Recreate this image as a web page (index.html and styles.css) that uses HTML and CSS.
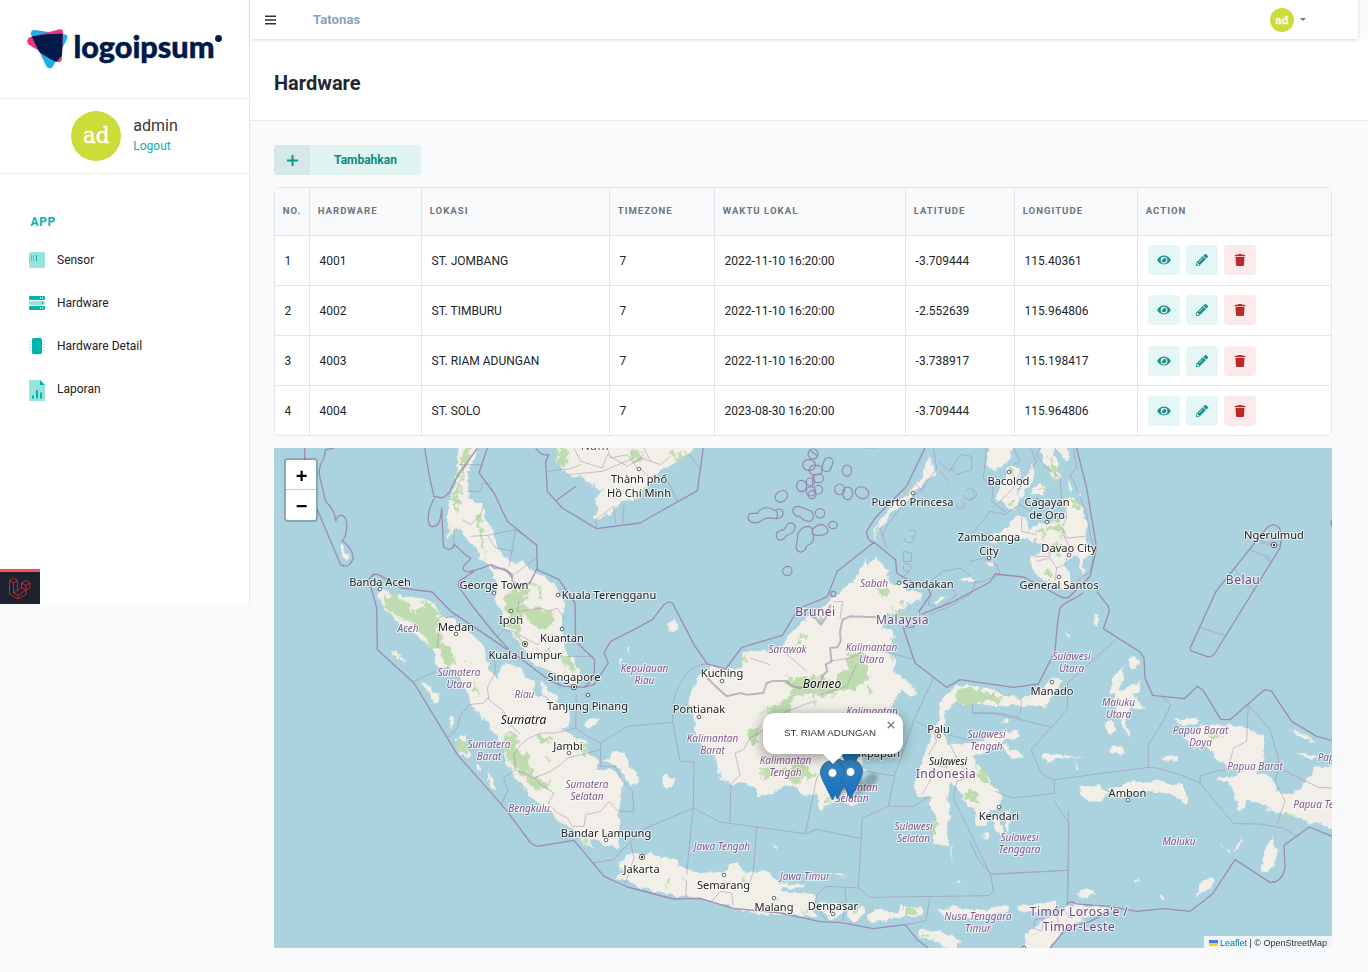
FILE: index.html
```html
<!DOCTYPE html>
<html lang="id">
<head>
<meta charset="utf-8">
<title>Hardware</title>
<link rel="stylesheet" href="styles.css">
</head>
<body>
<svg class="defs" width="0" height="0" aria-hidden="true">
  <symbol id="eye" viewBox="0 0 576 512"><path d="M572.52 241.4C518.29 135.59 410.93 64 288 64S57.68 135.64 3.48 241.41a32.35 32.35 0 0 0 0 29.19C57.71 376.41 165.07 448 288 448s230.32-71.64 284.52-177.41a32.35 32.35 0 0 0 0-29.19zM288 400a144 144 0 1 1 144-144 143.93 143.93 0 0 1-144 144zm0-240a95.31 95.31 0 0 0-25.31 3.79 47.85 47.85 0 0 1-66.9 66.9A95.78 95.78 0 1 0 288 160z"/></symbol>
  <symbol id="pencil" viewBox="0 0 512 512"><path d="M497.9 142.1l-46.1 46.1c-4.7 4.7-12.3 4.7-17 0l-111-111c-4.7-4.7-4.7-12.3 0-17l46.1-46.1c18.7-18.7 49.1-18.7 67.9 0l60.1 60.1c18.8 18.7 18.8 49.1 0 67.9zM284.2 99.8L21.6 362.4.4 483.9c-2.9 16.4 11.4 30.6 27.8 27.8l121.5-21.3 262.6-262.6c4.7-4.7 4.7-12.3 0-17l-111-111c-4.8-4.7-12.4-4.7-17.1 0zM124.1 339.9c-5.5-5.5-5.5-14.3 0-19.8l154-154c5.5-5.5 14.3-5.5 19.8 0s5.5 14.3 0 19.8l-154 154c-5.5 5.5-14.3 5.5-19.8 0zM88 424h48v36.3l-64.5 11.3-31.1-31.1L51.7 376H88v48z"/></symbol>
  <symbol id="trash" viewBox="0 0 448 512"><path d="M432 32H312l-9.4-18.7A24 24 0 0 0 281.1 0H166.8a23.72 23.72 0 0 0-21.4 13.3L136 32H16A16 16 0 0 0 0 48v32a16 16 0 0 0 16 16h416a16 16 0 0 0 16-16V48a16 16 0 0 0-16-16zM53.2 467a48 48 0 0 0 47.9 45h245.8a48 48 0 0 0 47.9-45L416 128H32z"/></symbol>
  <symbol id="pin" viewBox="0 0 25 41"><path d="M12.5.5C5.9.5.5 5.7.5 12.3c0 3 1.600 6.700 2.700 8.900L12.500 40l9.300-18.800c1.100-2.200 2.700-5.900 2.700-8.900C24.500 5.700 19.100.5 12.500.5z" fill="url(#pinfill)" stroke="#2e6c97"/><circle cx="12.500" cy="12.900" r="4.300" fill="#fff" stroke="#2e6c97" stroke-width=".6"/></symbol>
  <linearGradient id="pinfill" x1="0" y1="0" x2="0" y2="1"><stop offset="0" stop-color="#3883b7"/><stop offset="1" stop-color="#126fc6"/></linearGradient>
  <filter id="coast" filterUnits="userSpaceOnUse" x="-20" y="-20" width="3220" height="1540"><feTurbulence type="fractalNoise" baseFrequency=".035" numOctaves="3" seed="4"/><feDisplacementMap in="SourceGraphic" scale="26" xChannelSelector="R" yChannelSelector="G"/></filter>
  <filter id="woods" filterUnits="userSpaceOnUse" x="-20" y="-20" width="3220" height="1540"><feTurbulence type="fractalNoise" baseFrequency=".045" numOctaves="3" seed="9"/><feDisplacementMap in="SourceGraphic" scale="50" xChannelSelector="R" yChannelSelector="G"/></filter>
</svg>
<div class="page">
  <aside class="sidebar">
    <div class="brand">
      <svg width="200" height="44" viewBox="24 26 200 44" aria-label="logoipsum">
        <path d="M31 32Q32 29.500 35 30L65.500 34.500Q68.500 35.500 67 39L53 66.500Q49.500 70.500 46.500 66.500L31.500 36Q30.500 34 31 32z" fill="#1eaee8"/>
        <path d="M59.500 29.300Q63 29 63 32L61.800 59.500Q61 63 57.500 62L28.500 44.500Q25.500 41 29 37.500z" fill="#ee3480"/>
        <path d="M31.800 36.500Q46 33 62.800 33.800L62 55L56.300 62Q46 57 39.500 52Q35 44 31.800 36.500z" fill="#001a49"/>
        <text x="73.500" y="57.500" class="logo-text" textLength="141" lengthAdjust="spacingAndGlyphs">logoipsum</text>
        <circle cx="218.500" cy="38.500" r="3.400" fill="#001a49"/>
      </svg>
    </div>
    <div class="user">
      <div class="avatar avatar-lg">ad</div>
      <div class="user-info"><span class="user-name">admin</span><a class="logout">Logout</a></div>
    </div>
    <nav class="menu">
      <h3 class="menu-title">APP</h3>
      <a class="menu-item"><svg width="16" height="16" viewBox="0 0 16 16"><rect width="16" height="16" rx="2" fill="#99e2de"/><path d="M2.500 3v6M4.500 3v6" stroke="#4cc9c3"/><path d="M7.500 3v6" stroke="#00b5ad"/></svg>Sensor</a>
      <a class="menu-item"><svg width="16" height="16" viewBox="0 0 16 16"><rect y="1" width="16" height="4" rx="1" fill="#00b5ad"/><rect y="6" width="16" height="4" rx="1" fill="#99e2de"/><rect y="11" width="16" height="4" rx="1" fill="#00b5ad"/><path d="M11.500 2v2M13.500 2v2M11.500 12v2M13.500 12v2" stroke="#b2e9e6"/><path d="M13.500 7v2" stroke="#00b5ad"/></svg>Hardware</a>
      <a class="menu-item"><svg width="16" height="16" viewBox="0 0 16 16"><path d="M0 3.500h16M0 6.500h16M0 9.500h16M0 12.500h16" stroke="#99e2de" stroke-dasharray="2 12"/><rect x="3" width="10" height="16" rx="1.500" fill="#00b5ad"/></svg>Hardware Detail</a>
      <a class="menu-item"><svg class="report" width="16" height="21" viewBox="0 0 16 21"><path d="M0 0h11l5 5v16H0z" fill="#99e2de"/><path d="M11 0v5h5z" fill="#00b5ad"/><path d="M4 18.500v-3M8 18.500v-8.500M12 18.500v-6" stroke="#00b5ad" stroke-width="2"/></svg>Laporan</a>
    </nav>
    <div class="debugbar"><svg width="22" height="22" viewBox="0 0 22 22" fill="none" stroke="#e0302a" stroke-width=".8" stroke-linejoin="round"><path d="M.5 3.500l4-2.500 4 2.500v10l4-2.500V6l4.500-2.500L21 6v4.500L17 13v4.500L9 22l-8.500-4.800zM.5 3.500l4 2.500 4-2.500M4.500 6v10l4.500 2.500L17 13M4.500 16l4-2.500M12.500 6l4.500 2.500L21 6M17 8.500V13l-4.500-2.500M9 18.500V22"/></svg></div>
  </aside>
  <main class="main">
    <header class="topbar">
      <svg width="11" height="10" viewBox="0 0 11 10"><path d="M0 1.200h11M0 5h11M0 8.800h11" stroke="#303236" stroke-width="1.500"/></svg>
      <span class="app-name">Tatonas</span>
      <div class="account"><div class="avatar avatar-sm">ad</div><i class="caret"></i></div>
    </header>
    <div class="title-bar"><h1>Hardware</h1></div>
    <section class="content">
      <a class="add-button"><span class="add-icon"><svg width="11" height="11" viewBox="0 0 11 11"><path d="M5.500 0v11M0 5.500h11" stroke="#0d9488" stroke-width="2"/></svg></span><span class="add-label">Tambahkan</span></a>
      <div class="table-box">
        <table>
          <colgroup><col class="c1"><col class="c2"><col class="c3"><col class="c4"><col class="c5"><col class="c6"><col class="c7"><col></colgroup>
          <thead><tr><th>NO.</th><th>HARDWARE</th><th>LOKASI</th><th>TIMEZONE</th><th>WAKTU LOKAL</th><th>LATITUDE</th><th>LONGITUDE</th><th>ACTION</th></tr></thead>
          <tbody>
            <tr><td>1</td><td>4001</td><td>ST. JOMBANG</td><td>7</td><td>2022-11-10 16:20:00</td><td>-3.709444</td><td>115.40361</td><td class="raised"><div class="actions"><a class="act"><svg><use href="#eye"/></svg></a><a class="act"><svg><use href="#pencil"/></svg></a><a class="act del"><svg><use href="#trash"/></svg></a></div></td></tr>
            <tr><td>2</td><td>4002</td><td>ST. TIMBURU</td><td>7</td><td>2022-11-10 16:20:00</td><td>-2.552639</td><td>115.964806</td><td class="raised"><div class="actions"><a class="act"><svg><use href="#eye"/></svg></a><a class="act"><svg><use href="#pencil"/></svg></a><a class="act del"><svg><use href="#trash"/></svg></a></div></td></tr>
            <tr><td>3</td><td>4003</td><td>ST. RIAM ADUNGAN</td><td>7</td><td>2022-11-10 16:20:00</td><td>-3.738917</td><td>115.198417</td><td><div class="actions"><a class="act"><svg><use href="#eye"/></svg></a><a class="act"><svg><use href="#pencil"/></svg></a><a class="act del"><svg><use href="#trash"/></svg></a></div></td></tr>
            <tr><td>4</td><td>4004</td><td>ST. SOLO</td><td>7</td><td>2023-08-30 16:20:00</td><td>-3.709444</td><td>115.964806</td><td><div class="actions"><a class="act"><svg><use href="#eye"/></svg></a><a class="act"><svg><use href="#pencil"/></svg></a><a class="act del"><svg><use href="#trash"/></svg></a></div></td></tr>
          </tbody>
        </table>
      </div>
      <div class="map">
        <svg class="map-canvas" width="1058" height="500" viewBox="0 0 3174 1500">
          <!-- land masses -->
          <g class="land" filter="url(#coast)">
            <path d="M555 -30L612 -30L612 0L600 40L582 60L580 110L585 150L605 165L628 165L632 205L655 235L665 290L690 325L720 345L745 335L775 365L800 385L840 410L862 445L872 500L864 545L875 600L905 640L920 690L905 712L870 700L820 670L790 650L760 625L735 585L710 550L690 535L685 490L667 460L665 430L672 420L655 375L645 350L620 330L610 300L590 290L570 260L545 235L530 260L520 270L523 240L518 200L530 150L545 110L548 60Z"/>
            <path d="M312 440L325 420L350 432L380 445L440 448L475 462L500 485L515 510L545 512L575 545L620 580L640 610L634 640L665 690L685 650L720 650L750 670L758 690L740 688L780 700L790 740L830 760L870 770L890 800L885 830L865 845L900 860L940 880L942 915L975 940L965 960L1010 965L1035 980L1050 1005L1040 1040L1035 1080L1040 1130L1035 1205L1000 1190L975 1180L950 1180L960 1208L930 1180L890 1140L860 1120L830 1090L790 1060L765 1040L735 1000L700 950L690 900L665 860L640 820L600 790L580 750L565 700L545 660L520 660L485 645L478 600L430 560L370 520L330 485Z"/>
            <path d="M845 -30H1280L1260 0L1240 20L1200 45L1150 75L1120 105L1095 150L1060 155L1030 175L1000 200L965 215L970 150L985 125L950 110L920 85L885 80L855 50Z"/>
            <path d="M345 605L365 610L395 640L375 635ZM442 702L465 712L478 730L495 740L490 766L475 762L465 735ZM545 870L570 868L590 925L560 920ZM606 945L625 955L624 965L610 957ZM637 975L655 990L668 1020L668 1030L655 1015L640 990ZM528 800L540 820L530 845ZM990 935L1015 910L1038 908L1055 922L1068 955L1090 975L1092 1000L1068 1012L1050 980L1035 960ZM1158 985L1175 978L1203 990L1200 1010L1180 1022L1165 1012ZM935 820L950 805L975 820L950 835L940 850ZM1185 530L1200 515L1212 535L1198 553ZM202 290L212 295L222 325L215 340L205 325ZM800 702L830 735L850 750L835 760L805 740ZM700 645L730 655L725 680L705 690ZM1035 640L1045 635L1042 655ZM1060 605L1068 600L1068 615Z"/>
            <g transform="translate(1038)">
              <path d="M205 770L210 730L235 690L262 665L275 650L310 665L365 660L372 615L430 605L480 600L510 560L545 525L570 505L600 480L640 460L660 430L700 400L720 370L740 330L745 355L765 325L785 350L810 365L805 400L840 410L880 430L915 440L900 460L860 465L840 490L800 495L785 540L815 545L820 590L800 610L835 640L820 670L865 700L895 740L880 747L845 725L825 760L800 800L790 850L770 900L720 920L735 960L720 990L700 1020L715 1070L695 1075L660 1050L600 1088L597 1045L590 1035L560 1040L530 1020L500 1010L460 1035L410 1045L400 1010L350 1005L310 1005L300 980L285 930L250 900L225 840L220 800Z"/>
              <path d="M930 870L945 830L960 800L955 770L975 745L1010 715L1040 710L1100 720L1160 745L1240 745L1270 720L1285 700L1310 690L1325 700L1300 740L1270 780L1230 775L1180 770L1130 775L1050 765L1000 765L975 800L970 850L985 890L1020 890L1080 880L1150 850L1195 845L1195 870L1150 880L1100 910L1060 930L1090 970L1115 1010L1150 1040L1140 1080L1115 1090L1100 1130L1070 1135L1065 1090L1025 1060L1025 1040L990 1000L985 1040L990 1110L980 1180L990 1190L940 1190L945 1120L930 1050L890 1045L885 1010L905 950Z"/>
              <path d="M40 1215L110 1220L160 1235L185 1255L200 1270L240 1272L310 1275L330 1245L355 1245L365 1265L400 1275L440 1270L470 1295L490 1330L580 1335L590 1350L580 1385L590 1405L520 1400L420 1400L330 1375L200 1345L150 1340L60 1315L-15 1290L15 1270L-5 1268L0 1235ZM480 1310L555 1305L540 1318L485 1322ZM600 1370L650 1365L675 1385L640 1415L605 1390ZM680 1380L725 1370L735 1395L705 1420L685 1410ZM750 1390L770 1380L830 1397L845 1370L870 1385L905 1375L910 1400L850 1410L800 1420L750 1425L742 1415ZM955 1385L1000 1375L1100 1390L1160 1370L1170 1388L1130 1400L1050 1410L970 1405ZM1190 1375L1240 1368L1315 1362L1310 1380L1250 1392L1195 1390ZM895 1450L960 1445L1020 1475L1015 1500L975 1495L940 1475L895 1465Z"/>
              <path d="M925 25L935 40L942 80L920 105L890 125L860 165L820 190L785 240L772 245L782 215L810 180L850 150L880 115L910 90ZM765 280L778 240L780 215L762 250ZM940 465L960 445L985 442L965 458L945 475ZM1020 395L1070 390L1060 400L1030 402ZM1120 1105L1140 1100L1145 1150L1130 1155ZM1155 1090L1170 1085L1165 1150L1155 1140ZM1090 1155L1102 1152L1105 1175L1092 1172ZM1145 890L1160 885L1175 910L1200 905L1210 922L1175 930L1155 910ZM455 1195L470 1198L463 1206ZM993 1195L998 1195L996 1250ZM1135 825L1175 815L1165 825ZM1010 1290L1020 1295L1010 1300ZM640 1272L680 1285L660 1285Z"/>
            </g>
            <g transform="translate(2088)">
              <path d="M60 -30L130 -30L130 30L100 50L60 70L50 40ZM110 60L155 60L150 100L140 150L145 170L120 185L95 160L75 150L100 110ZM185 50L190 90L150 155L140 150L165 90ZM185 125L210 108L228 120L215 140L190 142ZM210 10L240 -20L265 50L270 90L250 95L235 60ZM250 -20L290 -20L300 30L285 42ZM60 290L70 260L110 240L145 205L172 210L180 240L165 262L200 230L240 225L285 210L280 160L300 145L335 180L350 220L350 290L365 315L335 330L345 370L335 380L328 330L305 325L285 350L300 380L300 420L285 430L255 410L220 395L190 370L185 330L210 320L220 290L175 275L130 265L90 275ZM45 345L65 342L68 355L50 360ZM295 90L302 115L298 135L292 110ZM325 125L333 140L328 155Z"/>
              <path d="M475 630L495 628L506 640L500 655L480 665ZM460 655L460 700L440 742L420 735L430 690ZM510 700L505 735L470 755L448 745L480 710ZM430 726L500 728L490 745L520 780L480 775L460 800L485 870L460 840L440 790ZM405 825L425 815L440 845L420 860ZM372 492L382 500L380 540L370 525ZM285 548L298 565L295 572ZM213 920L240 915L300 928L348 930L260 936L215 940ZM315 935L328 970L320 965ZM422 905L432 895L450 897L470 910L450 920L425 918ZM580 930L620 920L625 935L605 945ZM615 815L660 805L690 815L675 830L630 828ZM330 1020L390 1012L412 1035L395 1060L365 1065L335 1045ZM415 1025L480 1000L545 1004L560 993L600 1008L635 1010L655 1050L650 1065L610 1045L550 1030L490 1030L450 1050L420 1045Z"/>
              <path d="M640 870L690 840L720 830L780 830L830 840L875 860L885 890L878 950L865 975L900 980L915 1010L920 1030L955 1040L985 1020L1030 980L1030 960L1110 950V1155L1040 1125L980 1110L940 1100L900 1090L850 1060L830 1050L825 1080L800 1085L795 1050L770 1000L735 995L740 988L790 985L820 970L770 960L735 930L715 895L670 895ZM965 850L1000 858L1040 880L1015 885ZM970 915L1060 925L1060 932L1010 930ZM905 1170L923 1210L915 1250L890 1275L875 1270L880 1215ZM775 1195L790 1215L780 1212ZM815 1165L808 1200L795 1208ZM725 1285L735 1300L705 1335L675 1345L690 1310ZM315 1335L365 1325L380 1335L340 1348ZM565 1345L580 1338L587 1348L578 1360ZM500 1290L508 1287L505 1296ZM705 1260L700 1275L695 1278ZM750 1195L760 1198L755 1205ZM160 1530L165 1460L200 1430L260 1400L290 1375L340 1370L410 1375L380 1395L330 1420L270 1455L235 1510Z"/>
            </g>
          </g>
          <!-- forests -->
          <g class="forest" filter="url(#woods)">
            <path d="M325 440L350 440L400 458L420 490L455 458L490 478L495 520L485 545L500 575L530 600L545 645L510 650L495 610L480 600L440 560L430 530L380 512L335 475ZM700 435L730 430L770 405L755 440L735 470L800 480L840 495L835 530L810 545L780 530L745 495L735 560L750 620L730 560L700 530L695 480ZM575 -20L605 -20L575 50L560 95L555 185L540 190L545 130L560 60ZM605 190L625 200L622 250L640 330L620 290ZM690 860L725 865L730 900L770 925L775 980L820 1000L825 1030L780 1015L740 985L715 950L690 910ZM790 855L830 875L825 890L795 878ZM810 925L832 928L825 940L812 935ZM545 870L570 868L590 925L560 920ZM347 606L395 638L375 632ZM850 625L895 625L905 670L880 665ZM920 880L940 885L935 920L918 905ZM845 -20L890 10L870 60L855 45ZM1080 10L1110 20L1095 45L1070 30ZM1195 20L1235 8L1225 25L1200 35ZM915 1165L935 1175L945 1195ZM595 690L615 740L600 730ZM520 220L530 240L523 265ZM780 410L800 420L805 450L790 440ZM820 590L835 600L830 615ZM580 640L590 650L580 655Z"/>
            <g transform="translate(1038)">
              <path d="M495 690L515 685L515 705L540 685L610 685L640 705L680 660L682 615L715 605L745 660L748 690L705 720L680 715L640 735L590 745L575 790L420 795L480 765L510 740ZM420 960L470 965L455 985L430 1000L425 975ZM500 960L550 940L585 980L560 1000L520 1010L490 990ZM500 790H580V740H530ZM385 850L415 835L415 885L390 885ZM545 555L555 575L530 580ZM585 500L615 510L600 530ZM770 425L800 420L805 440L780 445ZM815 485L850 490L870 500L840 505ZM830 460L860 465L840 475ZM375 615L385 640L372 640ZM740 715L760 725L750 745ZM610 1040L640 1060L620 1065ZM340 672L360 680L350 690ZM850 145L870 130L865 145ZM765 255L772 240L775 255ZM1020 715L1060 725L1150 745L1130 765L1060 760L1015 770L1010 745ZM960 935L985 945L980 970L950 955ZM1040 1020L1070 1035L1080 1070L1040 1050ZM1065 955L1100 970L1120 1000L1095 1010L1075 985ZM935 1130L955 1125L950 1160L930 1150ZM690 1380L725 1375L710 1395ZM845 1370L860 1375L850 1385ZM860 1385L895 1380L890 1400L865 1405ZM900 1455L925 1458L915 1468ZM540 1380L565 1385L555 1395ZM60 1260L75 1265L65 1275ZM130 1300L150 1305L135 1315ZM370 1290L385 1300L375 1310ZM470 1350L485 1355L475 1365Z"/>
            </g>
            <g transform="translate(2088)"><path d="M120 60L135 65L132 90L120 80ZM115 155L135 160L130 178L118 170ZM235 15L255 45L265 80L250 92L240 55ZM205 120L225 122L215 132ZM195 250L225 245L225 275L205 265ZM235 235L270 215L275 260L285 285L265 260ZM245 285L270 290L265 330L245 320ZM215 370L245 375L250 398L225 390ZM285 150L320 160L335 180L310 180ZM725 855L745 860L740 875L725 870ZM755 860L765 865L760 875ZM925 868L937 870L935 882ZM1015 870L1030 878L1015 885ZM935 1095L975 1105L945 1108ZM190 1455L200 1450L195 1465Z"/></g>
          </g>
          <!-- province borders -->
          <g class="thin">
            <path d="M555 50H620M580 130H620L625 105L655 108M530 155L560 160M565 215L590 230L620 200L630 165M590 265L640 262L725 245L790 292M640 262L665 300L720 310M725 245L705 355M787 330L720 380M735 460L730 490L770 485L800 480L825 490L850 480L870 510M735 560L790 590L835 560L870 580M690 545L665 570M690 545L720 550L760 600M735 640L750 610M540 250V300M495 545L490 600M515 510L560 500M660 610L665 670L640 720L645 755L690 790L700 820L740 860M420 700L485 670M520 870L550 840L560 800L585 770L630 765L645 745M765 870L740 890L720 920L725 965L780 990M765 870L800 855L840 855L870 850L905 840L907 740M780 990L830 970L860 950L880 930L980 905M980 885V955L1025 956L1045 1000L1075 1030L1080 1090L1033 1090M905 840L935 862L980 885L1060 835L1198 823M725 965L688 990L702 1025L682 1070M780 990L800 1010L840 1035L822 1065L850 1095L880 1110L895 1135L930 1135L935 1100L980 1090L1005 1060L1033 1090M895 1140L878 1180M955 1245L1020 1235L1045 1205L1115 1140L1258 1080M1070 1185L1080 1230L1052 1310M820 70L890 62L920 50M880 80L985 70L1080 30M968 242L965 215L1018 175L1025 225M1050 170L1045 230M900 0L920 40L985 60L1000 20L1060 55L1100 30L1160 50L1190 25M880 625H960M850 700L860 720M1098 60L1140 100M1170 75L1210 160M1245 20L1278 60M1000 0L1010 30L1060 20L1090 60M1110 0L1130 40"/>
            <g transform="translate(1038)">
              <path d="M260 648Q190 650 160 760L158 820L180 940L222 942L220 1080L210 1170L200 1280M220 1080L300 1122L556 1157L592 1144L722 1172M330 1122L332 1010L360 980L345 915L370 905L390 870L415 855L500 790L580 760M556 1157L590 990L620 950M410 1138L400 1270L380 1330M185 1290L200 1300L197 1345M275 1360L300 1330L335 1335L340 1375M715 1320L727 1110L805 1075L880 1075L930 1045M805 1075L825 980L880 820L940 690M740 970L825 984M630 640L690 630L750 600L875 632M600 740L680 715L710 650M660 515L668 460L640 462M715 1320L750 1348L1108 1343L1120 1330L1112 1280L1000 1050L1010 1000L1050 985M715 1320L620 1315L590 1340L585 1370L620 1418M675 1322L678 1360L668 1420M930 1345L918 1418L860 1430M890 820L940 850L950 880L925 920M985 860L1060 880L1090 900M990 890L1020 950L1060 990M1055 795L1128 797L1295 838M1200 800L1205 760L1180 740M1130 725L1115 745M885 105L910 130M960 70L985 100M1112 1280L1343 1267M1345 1090V1205L1343 1365M390 630L450 650M490 610L560 670M620 1010L650 1040M905 1040L930 1000L940 970"/>
              <path d="M770 0L730 0M940 0L950 60L905 125L840 180L800 235L785 270M955 40L990 70L1020 20L1055 25V65L1010 80L990 60M850 310L875 315V340L850 340ZM855 270a14 10 0 1 0 20-5a12 10 0 1 0-10-14M1010 170a12 11 0 1 0 18-8M1030 140a20 16 0 1 0 5-12M800 600L820 640"/>
              <path d="M780 240L790 270L800 300M870 370L850 385M850 360a10 12 0 1 0 22-5a10 10 0 1 0-22 5M870 400L920 410L970 370L1020 360L1070 400L1050 440L1000 470L930 500M980 400L1010 440L960 480L925 470L935 430"/>
            </g>
            <g transform="translate(2088)">
              <path d="M50 0L40 90L70 120L65 160L110 195L150 170L180 190L200 150L240 170L275 150L270 90L230 60L200 20L210 0M130 0L150 40L130 50M310 0L320 60L300 80L320 120L350 200L360 260L375 310L360 370L320 400M180 0L200 40L185 60M155 210V250L200 260M285 160L290 210L275 240L290 270L345 265M290 210L230 210M0 260L30 230L60 190L110 200M200 340L240 330L260 360L285 350L300 300L280 260M190 325H240L230 290M260 360L255 400M155 60L130 120L90 160M0 340L40 330L80 350L90 380L40 400L0 405M10 130Q20 145 0 155M840 305L880 322L905 345M790 360L855 430M690 538L765 563M870 285L910 292M885 320L905 335M868 278L930 292"/>
              <path d="M0 1180L25 1235L62 1278L292 1267M253 1036L128 1050L75 1030M253 1036V995L535 958L560 960L630 980L690 1005L790 1127L870 1128L940 1140L978 1163M253 1060L297 1125L292 1370M253 995L215 978L183 905L292 785V705L320 680L440 573M535 958V890L580 820L602 770L575 745M690 1005L690 985L735 970L775 965L790 900L830 880L835 770L900 845L925 930V960L915 1000L945 1060L920 1130M925 960L1045 1018L1086 1020M1080 950L1086 945M8 765V795L80 795L150 808M280 1380L300 1410L350 1390M260 1400L270 1440L310 1430M340 1380L335 1415M195 1415L220 1410L215 1450L190 1440Z"/>
            </g>
          </g>
          <!-- national borders -->
          <g class="border">
            <path d="M452 0L465 80L480 145L505 150L525 135L550 85L610 0M482 150C465 175 455 220 470 235C490 240 500 225 503 180L508 295C520 310 535 305 540 290C560 300 565 320 590 330C585 345 565 345 568 365C580 380 600 365 620 362L650 350L700 370L715 390M640 0L615 75L660 135L700 220L788 292L790 360L765 410M600 370L555 400L553 415L600 480L660 555L705 605L830 700L870 715L930 718L960 690L962 635L905 580L903 465L855 395L790 365M92 0V40M180 0L155 5L150 30Q130 60 138 90L155 160Q185 190 185 220Q190 200 205 202Q220 208 218 240Q215 270 205 278Q235 300 238 330Q225 365 200 350L130 185M700 605L620 550L530 490L475 432L380 420L330 390Q300 365 285 395L308 480L310 605L420 705L550 920L630 1010L700 1090L770 1185L790 1195L900 1177L990 1285L1060 1317L1198 1353L1278 1351L1378 1381L1520 1395L1638 1421L1703 1424L1798 1442L1893 1430L1930 1475L1963 1500M785 0Q800 25 825 20L815 40L820 130L865 180L968 242L1098 225L1270 128L1288 0M848 157L905 115M930 718L960 710L1003 645L990 615L1010 580L1080 545L1135 515L1170 470Q1190 455 1198 470L1260 590L1300 648L1355 663L1403 598L1525 562L1575 480L1640 455L1660 445L1690 370L1800 283L1865 335L1868 375L1900 395L1965 425L1970 440L1935 490L1940 500L2040 460L2148 402L2163 378L2248 387L2358 445Q2378 455 2388 445L2448 385L2468 300L2438 120L2408 0"/>
            <path d="M1953 0L1898 115L1803 210L1778 250Q1778 280 1800 283M2468 430L2503 475L2506 490L2488 542L2598 612L2610 630L2613 690L2636 742L2731 752L2771 715L2788 728L2840 814L2868 815L2968 728Q2980 722 2993 730L3053 820L3128 865L3174 877M2428 435L2368 470L2358 480L2350 530L2343 610L2293 708L2218 718L2058 695L2018 718L1923 645L1888 540L1918 537L1940 500M2978 240Q2998 220 3016 240L3023 265L3018 300L2823 615Q2813 630 2798 625L2756 610Q2743 605 2753 590L2826 430ZM2378 1370Q2388 1355 2408 1368L2508 1375L2588 1390L2668 1382L2748 1390L2788 1360L2818 1335L2883 1235L2988 1303Q3023 1305 3033 1260L3030 1192L3106 1137L3174 1165M2328 1500L2378 1440L2448 1420L2498 1395M3172 215V235"/>
            <path class="inland" d="M1300 690L1325 715L1358 745L1400 735L1420 740L1468 735L1478 705L1500 698L1538 700L1555 715L1578 720L1610 712L1638 715L1648 680L1660 670L1655 650L1673 640L1668 600L1690 598L1700 580L1698 550L1706 515L1728 505L1808 508M1610 505L1625 510L1640 530L1655 510L1670 470M650 350L660 360L690 362L715 380V400L735 410L770 405"/>
          </g>
          <!-- reef zones -->
          <g class="reef" transform="translate(1038)">
            <circle cx="579" cy="18" r="15"/><rect x="548" y="35" width="38" height="32" rx="16"/><rect x="609" y="28" width="27" height="43" rx="13" transform="rotate(20 622 50)"/><rect x="568" y="52" width="38" height="28" rx="13"/><ellipse cx="681" cy="68" rx="14" ry="17"/><ellipse cx="545" cy="114" rx="15" ry="17"/><circle cx="571" cy="102" r="12"/><rect x="582" y="78" width="28" height="26" rx="12"/><circle cx="573" cy="130" r="14"/><circle cx="595" cy="125" r="13"/><circle cx="576" cy="140" r="12"/><ellipse cx="659" cy="124" rx="15" ry="16"/><ellipse cx="683" cy="136" rx="15" ry="19"/><ellipse cx="726" cy="134" rx="21" ry="17" transform="rotate(25 726 134)"/><ellipse cx="484" cy="145" rx="20" ry="16" transform="rotate(-35 484 145)"/><path d="M425 218Q405 230 390 220Q378 208 390 196L412 196Q425 176 445 180Q458 180 462 188Q485 175 490 195Q488 213 465 212Q440 205 425 218ZM466 185Q478 198 468 212"/><path d="M518 185Q525 172 540 176L575 190Q588 210 570 220Q555 222 540 206Q520 205 518 185Z"/><circle cx="600" cy="196" r="14"/><path d="M470 255Q480 245 492 245L503 228Q520 218 526 237Q522 258 500 262Q490 280 475 275Q466 268 470 255ZM533 258Q545 235 565 235Q580 238 576 250Q588 275 570 288Q558 292 556 305Q540 320 530 305Q526 290 532 280ZM577 245Q590 228 610 230Q628 240 622 255Q600 268 577 258Z"/><ellipse cx="639" cy="231" rx="13" ry="11"/><circle cx="502" cy="369" r="14"/><circle cx="640" cy="438" r="8"/><path d="M571 8L594 25M578 80V115"/>
          </g>
          <!-- place names -->
          <g class="labels" transform="scale(3) translate(-274 -448)">
            <g class="dots"><circle cx="380" cy="589" r="1.800"/><circle cx="494" cy="593" r="1.800"/><circle cx="558" cy="595" r="1.800"/><circle cx="511" cy="611" r="1.800"/><circle cx="562" cy="629" r="1.800"/><circle cx="456" cy="634" r="1.800"/><circle cx="588" cy="695" r="1.800"/><circle cx="569" cy="753" r="1.800"/><circle cx="606" cy="840" r="1.800"/><circle cx="722" cy="681" r="1.800"/><circle cx="699" cy="717" r="1.800"/><circle cx="899" cy="583" r="1.800"/><circle cx="913" cy="493" r="1.800"/><circle cx="639" cy="469" r="1.800"/><circle cx="1009" cy="472" r="1.800"/><circle cx="1047" cy="522" r="1.800"/><circle cx="989" cy="558" r="1.800"/><circle cx="1069" cy="555" r="1.800"/><circle cx="1059" cy="577" r="1.800"/><circle cx="1052" cy="682" r="1.800"/><circle cx="939" cy="736" r="1.800"/><circle cx="999" cy="807" r="1.800"/><circle cx="1128" cy="800" r="1.800"/><circle cx="724" cy="875" r="1.800"/><circle cx="774" cy="898" r="1.800"/><circle cx="833" cy="914" r="1.800"/><circle cx="1024" cy="948" r="1.800"/><circle cx="525" cy="644" r="2.700"/><circle cx="574" cy="687" r="2.700"/><circle cx="642" cy="857" r="2.700"/><circle cx="1274" cy="545" r="2.700"/></g>
            <g class="capitals"><circle cx="525" cy="644" r="1.200"/><circle cx="574" cy="687" r="1.200"/><circle cx="642" cy="857" r="1.200"/><circle cx="1274" cy="545" r="1.200"/></g>
            <g class="city"><text x="380" y="585.500">Banda Aceh</text><text x="494" y="589">George Town</text><text x="609" y="599">Kuala Terengganu</text><text x="511" y="624">Ipoh</text><text x="562" y="641.500">Kuantan</text><text x="456" y="630.500">Medan</text><text x="525" y="659">Kuala Lumpur</text><text x="574" y="681">Singapore</text><text x="587.500" y="710">Tanjung Pinang</text><text x="568" y="749.500">Jambi</text><text x="606" y="836.500">Bandar Lampung</text><text x="722" y="677">Kuching</text><text x="699" y="713">Pontianak</text><text x="928" y="587.500">Sandakan</text><text x="912.500" y="505.500">Puerto Princesa</text><text x="639" y="483">Thành phố</text><text x="639" y="496.500">Hồ Chí Minh</text><text x="1008.500" y="484.500">Bacolod</text><text x="1047" y="505.500">Cagayan</text><text x="1047" y="518.500">de Oro</text><text x="989" y="541">Zamboanga</text><text x="989" y="555">City</text><text x="1069" y="551.500">Davao City</text><text x="1059" y="589">General Santos</text><text x="1274" y="539">Ngerulmud</text><text x="1052" y="695">Manado</text><text x="938.500" y="733">Palu</text><text x="999" y="819.500">Kendari</text><text x="1127.500" y="796.500">Ambon</text><text x="641.500" y="873">Jakarta</text><text x="723.500" y="888.500">Semarang</text><text x="774" y="911">Malang</text><text x="833" y="910">Denpasar</text><text x="871" y="757">Balikpapan</text></g>
            <g class="region"><text x="408" y="632">Aceh</text><text x="459" y="675.500">Sumatera</text><text x="459" y="687.500">Utara</text><text x="524.500" y="697.500">Riau</text><text x="489" y="748">Sumatera</text><text x="489" y="760">Barat</text><text x="587" y="787.500">Sumatera</text><text x="587" y="799.500">Selatan</text><text x="529" y="811.500">Bengkulu</text><text x="644.500" y="672">Kepulauan</text><text x="644.500" y="684">Riau</text><text x="787.500" y="652.500">Sarawak</text><text x="874" y="587">Sabah</text><text x="871.500" y="651">Kalimantan</text><text x="871.500" y="663">Utara</text><text x="712.500" y="741.500">Kalimantan</text><text x="712.500" y="753.500">Barat</text><text x="785.500" y="764">Kalimantan</text><text x="785.500" y="776">Tengah</text><text x="872" y="715">Kalimantan</text><text x="852" y="790.500">Kalimantan</text><text x="852" y="802">Selatan</text><text x="913.500" y="830">Sulawesi</text><text x="913.500" y="842">Selatan</text><text x="986.500" y="738">Sulawesi</text><text x="986.500" y="750">Tengah</text><text x="1071.500" y="659.500">Sulawesi</text><text x="1071.500" y="671.500">Utara</text><text x="1118.500" y="706">Maluku</text><text x="1118.500" y="718">Utara</text><text x="1019.500" y="840.500">Sulawesi</text><text x="1019.500" y="852.500">Tenggara</text><text x="1200.500" y="734">Papua Barat</text><text x="1200.500" y="746">Daya</text><text x="1255" y="769.500">Papua Barat</text><text x="1325" y="807.500">Papua Tengah</text><text x="1332" y="761">Papua</text><text x="1179" y="845">Maluku</text><text x="722" y="849.500">Jawa Tengah</text><text x="805" y="880">Jawa Timur</text><text x="978" y="919.500">Nusa Tenggara</text><text x="978" y="931.500">Timur</text></g>
            <g class="country"><text x="815.500" y="615.500">Brunei</text><text x="902.500" y="624">Malaysia</text><text x="1243" y="584">Belau</text><text x="946" y="777.500">Indonesia</text><text x="1079" y="916">Timór Lorosa'e /</text><text x="1079" y="930.500">Timor-Leste</text><text x="595" y="450">Nam</text></g>
            <g class="island"><text x="523.500" y="724">Sumatra</text><text x="822" y="688">Borneo</text><text class="island-sm" x="948" y="765">Sulawesi</text></g>
          </g>
          <!-- station markers -->
          <g transform="scale(3) translate(-274 -448)">
            <path class="pin-shadow" d="M833 800L846 783Q852 772 861 777Q866 782 856 789ZM850 799L863 782Q870 770 877 775Q880 780 870 788Z"/>
            <use href="#pin" x="838" y="732" width="25" height="41"/><use href="#pin" x="825" y="759" width="25" height="41"/><use href="#pin" x="838" y="759" width="25" height="41"/><use href="#pin" x="820" y="760" width="25" height="41"/>
          </g>
        </svg>
        <div class="zoom"><a>+</a><a>−</a></div>
        <div class="popup"><div class="popup-body">ST. RIAM ADUNGAN</div><i class="popup-tip"></i><svg class="popup-close" width="8" height="8" viewBox="0 0 8 8"><path d="M.7.7l6.600 6.600M7.300.7L.7 7.300" stroke="#757575" stroke-width="1.300"/></svg></div>
        <div class="attribution"><svg width="9" height="6" viewBox="0 0 9 6"><path fill="#4c7be1" d="M0 0h9v3H0z"/><path fill="#ffd500" d="M0 3h9v3H0z"/></svg><a>Leaflet</a> | © OpenStreetMap</div>
      </div>
    </section>
  </main>
</div>
</body>
</html>
```
FILE: styles.css
```css
* { box-sizing: border-box; }
body { margin: 0; background: #f9fafc; color: #212529; font: 12px/18px Roboto, "Liberation Sans", sans-serif; }
.defs { position: absolute; }
.page { display: flex; align-items: flex-start; height: 972px; overflow: hidden; }

.sidebar { position: relative; width: 250px; flex: none; height: 604px; background: #fff; border-right: 1px solid #e4e7ed; }
.brand { height: 99px; padding: 26px 0 0 24px; border-bottom: 1px solid #e9ebee; }
.brand svg { display: block; }
.logo-text { font: 900 29.500px Lato, sans-serif; fill: #001a49; stroke: #001a49; stroke-width: .5px; }
.user { height: 75px; border-bottom: 1px solid #e9ebee; display: flex; align-items: center; justify-content: center; gap: 12px; }
.avatar { border-radius: 50%; background: #cddc39; color: #fff; font-family: "DejaVu Serif", serif; display: flex; align-items: center; justify-content: center; flex: none; -webkit-text-stroke: .4px #fff; }
.avatar-lg { width: 50px; height: 50px; font-size: 21.500px; }
.avatar-sm { width: 24px; height: 24px; font-size: 10.500px; }
.user-info { display: flex; flex-direction: column; padding-bottom: 2px; }
.user-name { font-size: 16px; line-height: 22px; color: #343a40; }
.logout { color: #00b5ad; }
.menu { padding: 39px 0 0 29px; }
.menu-title { margin: 0 0 7px 1.500px; font-size: 12px; font-weight: 700; letter-spacing: .6px; color: #00b5ad; }
.menu-item { display: flex; align-items: center; gap: 12px; height: 43px; color: #222; }
.report { margin-top: 3px; }
.debugbar { position: absolute; left: 0; bottom: 0; width: 40px; height: 35px; background: #1d212d; border-top: 3px solid #ff4f57; padding: 5px 0 0 9px; }

.main { flex: 1; min-width: 0; }
.topbar { position: relative; width: 1108px; height: 39px; background: #fff; box-shadow: 0 1px 3px rgba(130, 150, 180, .35); display: flex; align-items: center; padding: 0 52px 0 15px; }
.app-name { margin-left: 37px; font-size: 13px; font-weight: 700; letter-spacing: .1px; color: #869fbe; }
.account { margin-left: auto; display: flex; align-items: center; gap: 6px; padding-top: 1px; }
.caret { border: 3px solid transparent; border-top-color: #777; border-bottom: 0; margin-top: -2px; }
.title-bar { height: 82px; background: #fff; border-bottom: 1px solid #e6e9ee; padding: 6px 24px 0; display: flex; align-items: center; }
.title-bar h1 { margin: 0; font-size: 20px; line-height: 28px; font-weight: 700; color: #23272e; }
.content { padding: 24px 36px 24px 24px; display: flex; flex-direction: column; align-items: flex-start; gap: 12px; }
.add-button { display: flex; height: 30px; border-radius: 4px; overflow: hidden; background: #e0f4f2; color: #0d8a80; font-weight: 700; }
.add-icon { width: 36px; display: grid; place-items: center; background: #d4e9e7; }
.add-label { width: 111px; text-align: center; line-height: 30px; }

.table-box { width: 1058px; border: 1px solid #e1e6ee; border-radius: 5px; overflow: hidden; background: #fff; }
table { width: 100%; border-collapse: separate; border-spacing: 0; table-layout: fixed; }
.c1 { width: 35px; } .c2 { width: 112px; } .c3 { width: 188px; } .c4 { width: 105px; } .c5 { width: 191px; } .c6 { width: 109px; } .c7 { width: 123px; }
th, td { border-right: 1px solid #e1e6ee; border-bottom: 1px solid #e1e6ee; text-align: left; white-space: nowrap; }
th:last-child, td:last-child { border-right: 0; }
th { height: 48px; padding: 0 0 2px 7.700px; background: #f9fafc; font-size: 9.600px; font-weight: 700; letter-spacing: 1px; color: #6c757d; }
td { height: 50px; padding: 0 0 0 9.600px; }
td:last-child { padding-left: 10px; }
td.raised { padding-bottom: 2px; }
tr:last-child td { border-bottom: 0; height: 49px; }
.actions { display: flex; gap: 6px; }
.act { width: 32px; height: 30px; border-radius: 4px; background: #e4f6f5; color: #17918a; display: grid; place-items: center; }
.act svg { width: 14px; height: 12px; fill: currentColor; }
.del { background: #fce9e9; color: #b92b2b; }

.map { position: relative; width: 1058px; height: 500px; background: #aad3df; overflow: hidden; }
.map-canvas { display: block; }
.land { fill: #f2efe9; color-interpolation-filters: sRGB; }
.forest { fill: #b9d9aa; opacity: .9; }
.thin, .border, .reef { fill: none; stroke-linejoin: round; }
.thin { stroke: #a184ac; stroke-width: 2.500; opacity: .6; }
.border { stroke: #9a80a9; stroke-width: 4; opacity: .85; }
.inland { stroke-width: 6; opacity: .65; }
.reef { stroke: #9a84ad; stroke-width: 3.500; }
.labels { font-family: "Noto Sans", sans-serif; text-anchor: middle; stroke-linejoin: round; }
.labels text { paint-order: stroke; stroke: rgba(255, 255, 255, .65); stroke-width: 2.200px; }
.dots { fill: #fff; stroke: #444; stroke-width: .8; }
.capitals { fill: #333; }
.city { font-size: 11.100px; fill: #222; }
.region { font-size: 10px; font-style: italic; fill: #83588d; }
.country { font-size: 12px; fill: #70447a; letter-spacing: .5px; }
.island { font-size: 12px; font-style: italic; fill: #111; }
.island-sm { font-size: 10px; }
.pin-shadow { fill: #000; opacity: .22; filter: blur(1.500px); }

.zoom { position: absolute; left: 10px; top: 10px; border: 2px solid rgba(0, 0, 0, .2); border-radius: 4px; background-clip: padding-box; width: 34px; }
.zoom a { display: block; height: 30px; background: #fff; text-align: center; color: #000; font: bold 20px/32px "Liberation Sans", sans-serif; padding-left: 1px; }
.zoom a:first-child { border-bottom: 1px solid #ccc; border-radius: 2px 2px 0 0; }
.zoom a:last-child { border-radius: 0 0 2px 2px; }
.popup { position: absolute; left: 489px; top: 265px; width: 140px; height: 41px; border-radius: 12px; background: #fff; box-shadow: 0 3px 14px rgba(0, 0, 0, .4); }
.popup-body { padding-left: 21px; font: 9.750px/40px "Liberation Sans", sans-serif; color: #333; }
.popup-tip { position: absolute; left: 60px; top: 41px; border: 10px solid transparent; border-top-color: #fff; border-bottom: 0; }
.popup-close { position: absolute; right: 8px; top: 8px; }
.attribution { position: absolute; right: 0; bottom: 0; height: 12px; padding: 0 5px; background: rgba(255, 255, 255, .8); font: 9px/14px "Liberation Sans", sans-serif; color: #333; white-space: nowrap; }
.attribution a { color: #0078a8; margin-left: 2px; }
```
